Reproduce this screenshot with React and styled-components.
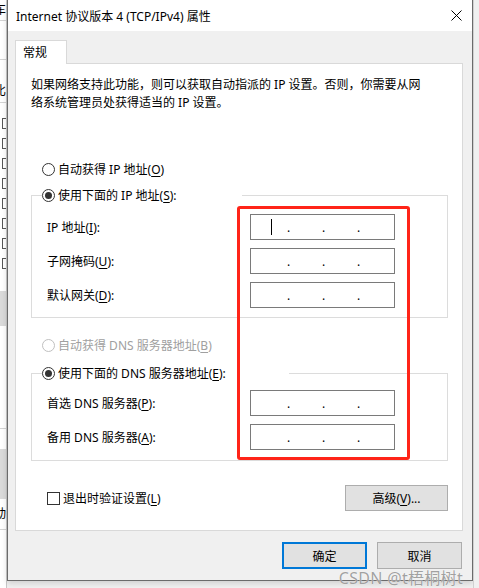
import React from "react";
import styled, { createGlobalStyle } from "styled-components";

const GlobalStyle = createGlobalStyle`
  body {
    margin: 0;
    background: #f0f0f0;
    font-family: "Noto Sans", "Noto Sans CJK SC", sans-serif;
    font-size: 12px;
    color: #000;
  }
`;

const Screen = styled.div`
  position: relative;
  display: flex;
  width: 479px;
  height: 588px;
  overflow: hidden;
  background: #f0f0f0;
`;

const BehindLeft = styled.div`
  width: 7px;
  flex-shrink: 0;
  background: #fff;
  border-right: 1px solid #c8c8c8;
  box-sizing: border-box;
  overflow: hidden;
  display: flex;
  flex-direction: column;
`;

const Scrap = styled.div`
  height: ${(p) => p.$h}px;
  flex-shrink: 0;
  background: ${(p) => p.$bg || "transparent"};
  border-bottom: ${(p) => (p.$line ? "1px solid #d4d4d4" : "none")};
  font-size: 12px;
  line-height: ${(p) => p.$h}px;
  white-space: nowrap;
  margin-left: -6px;
`;

const TinyCheck = styled.div`
  height: 20px;
  flex-shrink: 0;
  display: flex;
  align-items: center;
  justify-content: flex-end;

  &::after {
    content: "";
    width: 3px;
    height: 9px;
    border: 1px solid #555;
    border-right: none;
  }
`;

const BehindRight = styled.div`
  flex: 1;
  background: #f0f0f0;
  border-left: 1px solid #d0d0d0;
`;

const Window = styled.div`
  width: 466px;
  height: 581px;
  flex-shrink: 0;
  box-sizing: border-box;
  border: 1px solid #6b6b6b;
  border-top: none;
  background: #f0f0f0;
  display: flex;
  flex-direction: column;
  box-shadow: 0 2px 6px rgba(0, 0, 0, 0.15);
`;

const TitleBar = styled.div`
  height: 31px;
  background: #fff;
  display: flex;
  align-items: center;
  justify-content: space-between;
  padding: 0 10px 0 8px;
  font-size: 12px;
`;

const Body = styled.div`
  padding: 9px 9px 0 7px;
  display: flex;
  flex-direction: column;
`;

const TabStrip = styled.div`
  display: flex;
`;

const Tab = styled.div`
  position: relative;
  z-index: 1;
  width: 52px;
  height: 24px;
  box-sizing: border-box;
  margin-bottom: -1px;
  padding-left: 7px;
  background: #fff;
  border: 1px solid #d9d9d9;
  border-bottom: none;
  font-size: 12px;
  line-height: 23px;
`;

const Panel = styled.div`
  height: 468px;
  box-sizing: border-box;
  background: #fff;
  border: 1px solid #d9d9d9;
  padding: 0 14px 0 15px;
  display: flex;
  flex-direction: column;
`;

const Intro = styled.p`
  margin: 12px 0 0;
  font-size: 12px;
  line-height: 18px;
`;

const Radio = styled.label`
  display: flex;
  align-items: center;
  gap: 3px;
  height: 18px;
  margin: ${(p) => p.$top || 0}px 0 0 ${(p) => (p.$inLegend ? 0 : 11)}px;
  font-size: 12px;
  color: ${(p) => (p.$disabled ? "#a0a0a0" : "#000")};
  white-space: nowrap;
`;

const Dot = styled.span`
  width: 13px;
  height: 13px;
  box-sizing: border-box;
  border-radius: 50%;
  border: 1px solid ${(p) => (p.$disabled ? "#c0c0c0" : "#333")};
  background: #fff;
  display: flex;
  align-items: center;
  justify-content: center;

  &::after {
    content: "";
    display: ${(p) => (p.$on ? "block" : "none")};
    width: 7px;
    height: 7px;
    border-radius: 50%;
    background: #333;
  }
`;

const Key = styled.u`
  text-decoration: underline;
  text-underline-offset: 2px;
`;

const Group = styled.fieldset`
  margin: ${(p) => p.$top}px 0 0;
  padding: ${(p) => p.$padTop}px 0 ${(p) => p.$padBottom}px 0;
  border: 1px solid #dcdcdc;
  min-width: 0;
  display: flex;
  flex-direction: column;
  gap: 8px;
`;

const Legend = styled.legend`
  width: ${(p) => p.$w}px;
  margin-left: 10px;
  padding: 0;
  background: #fff;
`;

const FieldRow = styled.div`
  display: flex;
  align-items: center;
  height: 26px;
  padding-left: 15px;
`;

const FieldLabel = styled.span`
  width: 203px;
  font-size: 12px;
`;

const IpBox = styled.div`
  width: 145px;
  height: 26px;
  box-sizing: border-box;
  border: 1px solid #7a7a7a;
  background: #fff;
  display: flex;
  align-items: center;
  padding-left: 4px;
  font-size: 12px;
`;

const Octet = styled.span`
  width: 32px;
  display: flex;
  justify-content: center;
`;

const Sep = styled.span`
  width: 3px;
  text-align: center;
  line-height: 12px;
  padding-top: 2px;
`;

const Caret = styled.span`
  width: 1px;
  height: 16px;
  background: #000;
`;

const BottomRow = styled.div`
  margin-top: 24px;
  display: flex;
  align-items: center;
  justify-content: space-between;
`;

const Check = styled.label`
  display: flex;
  align-items: center;
  gap: 3px;
  margin-left: 16px;
  font-size: 12px;
`;

const Box = styled.span`
  width: 13px;
  height: 13px;
  box-sizing: border-box;
  border: 1px solid #333;
  background: #fff;
`;

const Button = styled.button`
  width: ${(p) => p.$w}px;
  height: ${(p) => p.$h}px;
  box-sizing: border-box;
  padding: 0;
  background: #e1e1e1;
  border: ${(p) => (p.$default ? "2px solid #0078d7" : "1px solid #adadad")};
  font-family: inherit;
  font-size: 12px;
  color: #000;
`;

const DialogButtons = styled.div`
  margin-top: 11px;
  padding-right: 1px;
  display: flex;
  justify-content: flex-end;
  gap: 10px;
`;

const Annotation = styled.div`
  position: absolute;
  left: 237px;
  top: 206px;
  width: 173px;
  height: 254px;
  box-sizing: border-box;
  border: 3px solid #ff2418;
  border-radius: 3px;
  pointer-events: none;
`;

const Watermark = styled.div`
  position: absolute;
  right: 16px;
  bottom: 0;
  font-family: "Noto Sans", "Noto Sans CJK SC", sans-serif;
  font-size: 16px;
  line-height: 19px;
  color: rgba(120, 120, 120, 0.7);
  text-shadow: 0 0 1px #fff;
  letter-spacing: 0.3px;
  pointer-events: none;
`;

function CloseIcon() {
  return (
    <svg width="11" height="11" viewBox="0 0 11 11">
      <path d="M0.5 0.5L10.5 10.5M10.5 0.5L0.5 10.5" stroke="#000" strokeWidth="1" />
    </svg>
  );
}

function IpField({ focused }) {
  return (
    <IpBox>
      <Octet>{focused && <Caret />}</Octet>
      <Sep>.</Sep>
      <Octet />
      <Sep>.</Sep>
      <Octet />
      <Sep>.</Sep>
      <Octet />
    </IpBox>
  );
}

function Field({ label, focused }) {
  return (
    <FieldRow>
      <FieldLabel>{label}</FieldLabel>
      <IpField focused={focused} />
    </FieldRow>
  );
}

function RadioOption({ on, disabled, top, inLegend, children }) {
  return (
    <Radio $top={top} $disabled={disabled} $inLegend={inLegend}>
      <Dot $on={on} $disabled={disabled} />
      <span>{children}</span>
    </Radio>
  );
}

export default function App() {
  return (
    <>
      <GlobalStyle />
      <Screen>
        <BehindLeft>
          <Scrap $h={20} $line>车</Scrap>
          <Scrap $h={38} $line />
          <Scrap $h={20} />
          <Scrap $h={22} $line>比</Scrap>
          <Scrap $h={10} />
          {Array.from({ length: 8 }).map((_, i) => (
            <TinyCheck key={i} />
          ))}
          <Scrap $h={18} />
          <Scrap $h={35} $bg="#dadada" />
          <Scrap $h={102} $line />
          <Scrap $h={20} />
          <Scrap $h={50} $bg="#dadada" />
          <Scrap $h={30} $line>动</Scrap>
        </BehindLeft>

        <Window>
          <TitleBar>
            <span>Internet 协议版本 4 (TCP/IPv4) 属性</span>
            <CloseIcon />
          </TitleBar>

          <Body>
            <TabStrip>
              <Tab>常规</Tab>
            </TabStrip>
            <Panel>
              <Intro>
                如果网络支持此功能，则可以获取自动指派的 IP 设置。否则，你需要从网
                <br />
                络系统管理员处获得适当的 IP 设置。
              </Intro>

              <RadioOption top={48}>
                自动获得 IP 地址(<Key>O</Key>)
              </RadioOption>

              <Group $top={8} $padTop={10} $padBottom={9}>
                <Legend $w={200}>
                  <RadioOption on inLegend>
                    使用下面的 IP 地址(<Key>S</Key>):
                  </RadioOption>
                </Legend>
                <Field label={<>IP 地址(<Key>I</Key>):</>} focused />
                <Field label={<>子网掩码(<Key>U</Key>):</>} />
                <Field label={<>默认网关(<Key>D</Key>):</>} />
              </Group>

              <RadioOption top={18} disabled>
                自动获得 DNS 服务器地址(<Key>B</Key>)
              </RadioOption>

              <Group $top={10} $padTop={8} $padBottom={10}>
                <Legend $w={247}>
                  <RadioOption on inLegend>
                    使用下面的 DNS 服务器地址(<Key>E</Key>):
                  </RadioOption>
                </Legend>
                <Field label={<>首选 DNS 服务器(<Key>P</Key>):</>} />
                <Field label={<>备用 DNS 服务器(<Key>A</Key>):</>} />
              </Group>

              <BottomRow>
                <Check>
                  <Box />
                  <span>退出时验证设置(<Key>L</Key>)</span>
                </Check>
                <Button $w={103} $h={26}>
                  高级(<Key>V</Key>)...
                </Button>
              </BottomRow>
            </Panel>

            <DialogButtons>
              <Button $w={85} $h={27} $default>确定</Button>
              <Button $w={85} $h={27}>取消</Button>
            </DialogButtons>
          </Body>
        </Window>

        <BehindRight />

        <Annotation />
        <Watermark>CSDN @t梧桐树t</Watermark>
      </Screen>
    </>
  );
}
